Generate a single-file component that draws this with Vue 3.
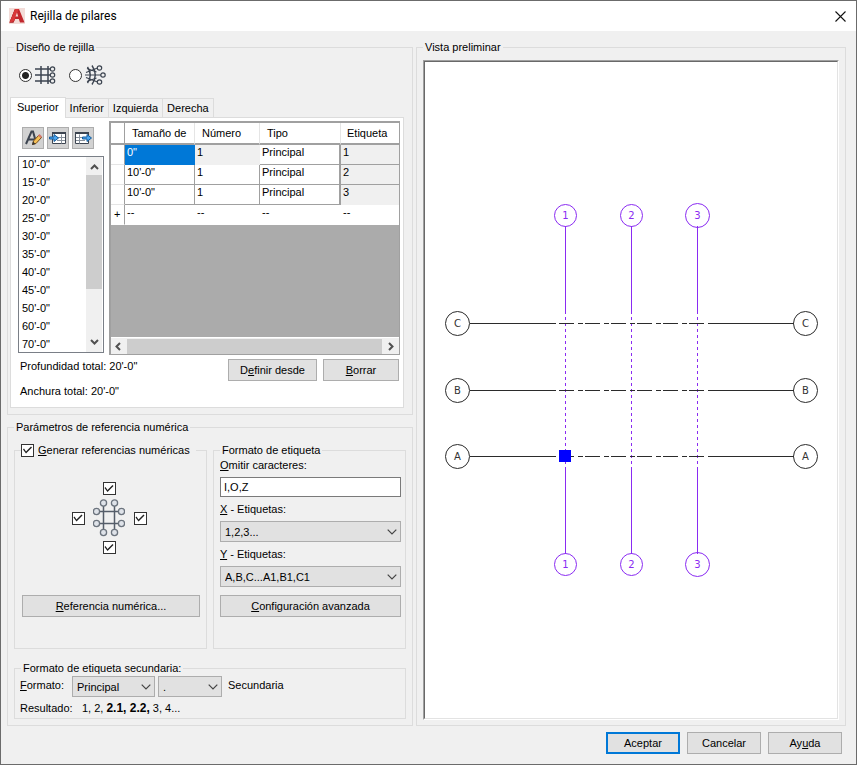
<script setup>
import { ref } from 'vue'

const gridType = ref('rect')
const activeTab = ref('Superior')
const tabs = ['Superior', 'Inferior', 'Izquierda', 'Derecha']
const spacings = ["10'-0\"", "15'-0\"", "20'-0\"", "25'-0\"", "30'-0\"", "35'-0\"", "40'-0\"", "45'-0\"", "50'-0\"", "60'-0\"", "70'-0\""]
const rows = [
  { size: '0"', num: '1', type: 'Principal', label: '1', first: true },
  { size: "10'-0\"", num: '1', type: 'Principal', label: '2' },
  { size: "10'-0\"", num: '1', type: 'Principal', label: '3' }
]
const generate = ref(true)
const sides = ref({ top: true, left: true, right: true, bottom: true })
const omit = ref('I,O,Z')

const verticals = [
  { x: 140.5, r: 11, name: '1' },
  { x: 206.5, r: 11, name: '2' },
  { x: 272.5, r: 12, name: '3' }
]
const horizontals = [
  { y: 261.5, name: 'C' },
  { y: 328.5, name: 'B' },
  { y: 394.5, name: 'A' }
]
</script>

<template>
  <div class="dialog">
    <header class="titlebar">
      <svg class="logo" width="16" height="16" viewBox="0 0 16 16">
        <rect width="16" height="16" fill="#f3dcd8" />
        <path d="M6 1h4l5.500 13.500H11L9.800 11H5.600L4.500 14.500H.5z" fill="#c1272d" />
        <path d="M6 1L.5 14.500h4L9.500 2z" fill="#8e1518" />
        <path d="M6 1h4L5 13.500.5 14.500z" fill="#d8383a" />
        <path d="M8 4.500L9.200 8.500H6.600z" fill="#f3dcd8" />
      </svg>
      <h1>Rejilla de pilares</h1>
      <button class="close" aria-label="Cerrar">
        <svg width="11" height="11" viewBox="0 0 11 11"><path d="M.5.5l10 10M10.500.5l-10 10" stroke="#111" stroke-width="1.100" /></svg>
      </button>
    </header>

    <main class="content">
      <div class="left">
        <fieldset class="group design">
          <legend>Diseño de rejilla</legend>
          <div class="types">
            <label>
              <input v-model="gridType" type="radio" name="type" value="rect" aria-label="Rejilla rectangular" />
              <svg width="21" height="20" viewBox="0 0 21 20" fill="none" stroke="#3c4450">
                <path d="M6 1v18M13 1v18" stroke-width="1.500" />
                <path d="M0 4h15M0 10h15M0 16h15" stroke-width="1.500" />
                <g fill="#f0f0f0" stroke-width="1.200"><circle cx="17.500" cy="4" r="2.200" /><circle cx="17.500" cy="10" r="2.200" /><circle cx="17.500" cy="16" r="2.200" /></g>
              </svg>
            </label>
            <label>
              <input v-model="gridType" type="radio" name="type" value="radial" aria-label="Rejilla radial" />
              <svg width="21" height="20" viewBox="0 0 21 20" fill="none" stroke="#3c4450">
                <path d="M2.500 2Q8 10 2.500 18M7 .5Q13.500 10 7 19.500" stroke-width="1.400" />
                <path d="M0 10h16M1 7.500L12.500 3M1 12.500L12.500 17M2 3.500l9.500 3.500M2 16.500l9.500-3.500" stroke-width="1.200" />
                <g fill="#f0f0f0" stroke-width="1.200"><circle cx="14.500" cy="3" r="2.200" /><circle cx="18" cy="10" r="2.200" /><circle cx="14.500" cy="17" r="2.200" /></g>
              </svg>
            </label>
          </div>

          <div class="tabs" role="tablist">
            <button v-for="t in tabs" :key="t" role="tab" :aria-selected="t === activeTab" :class="{ active: t === activeTab }" @click="activeTab = t">{{ t }}</button>
          </div>

          <div class="panel">
            <div class="lists">
              <div class="spacing">
                <div class="tools">
                  <button aria-label="Editar">
                    <svg width="20" height="20" viewBox="0 0 20 20">
                      <path d="M3 16L8.500 3.500H10L13 14M5.500 11.500H11" fill="none" stroke="#3c4450" stroke-width="2" />
                      <path d="M9.500 16.500l1-3.500 5.500-6 2.500 2.500-5.500 6z" fill="#f4c056" stroke="#7a4c12" />
                      <path d="M9 17l1-3.500 2.500 2.500z" fill="#333" />
                      <path d="M15 7.500l1.500-1.500 2.500 2.500-1.500 1.500z" fill="#d4776b" />
                    </svg>
                  </button>
                  <button aria-label="Insertar">
                    <svg width="20" height="20" viewBox="0 0 20 20">
                      <path d="M4.500 4.500h13v11h-13z" fill="#fff" stroke="#3c4450" />
                      <path d="M4 4h14v2H4z" fill="#3c4450" />
                      <path d="M9 9.500h8M9 12.500h8M13.500 6.500v9" stroke="#87909b" />
                      <path d="M1.500 9H6V6.500l4.500 3.500L6 13.500V11H1.500z" fill="#4da6f0" stroke="#125b9c" />
                    </svg>
                  </button>
                  <button aria-label="Extraer">
                    <svg width="20" height="20" viewBox="0 0 20 20">
                      <path d="M2.500 4.500h13v11h-13z" fill="#fff" stroke="#3c4450" />
                      <path d="M2 4h14v2H2z" fill="#3c4450" />
                      <path d="M3 9.500h9M3 12.500h9M6.500 6.500v9" stroke="#87909b" />
                      <path d="M9.500 9H14V6.500l4.500 3.500-4.500 3.500V11H9.500z" fill="#4da6f0" stroke="#125b9c" />
                    </svg>
                  </button>
                </div>
                <div class="listbox">
                  <select size="11" multiple aria-label="Distancias">
                    <option v-for="s in spacings" :key="s">{{ s }}</option>
                  </select>
                  <div class="vbar">
                    <svg width="9" height="6" viewBox="0 0 9 6"><path d="M1 5l3.500-3.500L8 5" /></svg>
                    <i></i>
                    <svg width="9" height="6" viewBox="0 0 9 6"><path d="M1 1l3.500 3.500L8 1" /></svg>
                  </div>
                </div>
              </div>

              <div class="sheet">
                <table>
                  <colgroup><col class="c0" /><col class="c1" /><col class="c2" /><col class="c3" /><col /></colgroup>
                  <thead>
                    <tr><th></th><th>Tamaño de</th><th>Número</th><th>Tipo</th><th>Etiqueta</th></tr>
                  </thead>
                  <tbody>
                    <tr v-for="r in rows" :key="r.label" :class="{ first: r.first }">
                      <td></td><td>{{ r.size }}</td><td>{{ r.num }}</td><td>{{ r.type }}</td><td>{{ r.label }}</td>
                    </tr>
                    <tr class="new"><td>+</td><td>--</td><td>--</td><td>--</td><td>--</td></tr>
                  </tbody>
                </table>
                <div class="hbar">
                  <svg width="6" height="9" viewBox="0 0 6 9"><path d="M5 1L1.500 4.500 5 8" /></svg>
                  <i></i>
                  <svg width="6" height="9" viewBox="0 0 6 9"><path d="M1 1l3.500 3.500L1 8" /></svg>
                </div>
              </div>
            </div>

            <div class="totals">
              <div class="sums">
                <p>Profundidad total: 20'-0"</p>
                <p>Anchura total: 20'-0"</p>
              </div>
              <button class="btn define">D<u>e</u>finir desde</button>
              <button class="btn clear"><u>B</u>orrar</button>
            </div>
          </div>
        </fieldset>

        <fieldset class="group params">
          <legend>Parámetros de referencia numérica</legend>
          <div class="pair">
            <fieldset class="group generate">
              <legend>
                <label class="check"><input v-model="generate" type="checkbox" /><span><u>G</u>enerar referencias numéricas</span></label>
              </legend>
              <div class="sides">
                <input v-model="sides.top" class="top" type="checkbox" aria-label="Superior" />
                <input v-model="sides.left" class="west" type="checkbox" aria-label="Izquierda" />
                <svg class="mid" width="32" height="38" viewBox="0 0 32 38" fill="none" stroke="#6c747e">
                  <path d="M10.500 7v24M21.500 7v24M6 12.500h20M6 24.500h20" stroke="#555d69" stroke-width="1.500" />
                  <g fill="#dfe3e9" stroke-width="1.300">
                    <circle cx="10.500" cy="4" r="3.100" /><circle cx="21.500" cy="4" r="3.100" />
                    <circle cx="3.500" cy="12.500" r="3.100" /><circle cx="28.500" cy="12.500" r="3.100" />
                    <circle cx="3.500" cy="24.500" r="3.100" /><circle cx="28.500" cy="24.500" r="3.100" />
                    <circle cx="10.500" cy="33.500" r="3.100" /><circle cx="21.500" cy="33.500" r="3.100" />
                  </g>
                </svg>
                <input v-model="sides.right" class="east" type="checkbox" aria-label="Derecha" />
                <input v-model="sides.bottom" class="bottom" type="checkbox" aria-label="Inferior" />
              </div>
              <button class="btn"><u>R</u>eferencia numérica...</button>
            </fieldset>

            <fieldset class="group format">
              <legend>Formato de etiqueta</legend>
              <label for="omit"><u>O</u>mitir caracteres:</label>
              <input id="omit" v-model="omit" type="text" />
              <label for="xl"><u>X</u> - Etiquetas:</label>
              <div class="combo">
                <select id="xl"><option>1,2,3...</option></select>
                <svg width="10" height="6" viewBox="0 0 10 6"><path d="M.7.7L5 5 9.300.7" /></svg>
              </div>
              <label for="yl"><u>Y</u> - Etiquetas:</label>
              <div class="combo">
                <select id="yl"><option>A,B,C...A1,B1,C1</option></select>
                <svg width="10" height="6" viewBox="0 0 10 6"><path d="M.7.7L5 5 9.300.7" /></svg>
              </div>
              <button class="btn"><u>C</u>onfiguración avanzada</button>
            </fieldset>
          </div>

          <fieldset class="group secondary">
            <legend>Formato de etiqueta secundaria:</legend>
            <div class="line">
              <label for="fmt" class="key"><u>F</u>ormato:</label>
              <div class="combo main">
                <select id="fmt"><option>Principal</option></select>
                <svg width="10" height="6" viewBox="0 0 10 6"><path d="M.7.7L5 5 9.300.7" /></svg>
              </div>
              <div class="combo sep">
                <select aria-label="Separador"><option>.</option></select>
                <svg width="10" height="6" viewBox="0 0 10 6"><path d="M.7.7L5 5 9.300.7" /></svg>
              </div>
              <span class="sec">Secundaria</span>
            </div>
            <div class="result"><span>Resultado:</span><span>1, 2,</span><b>2.1, 2.2,</b><span>3, 4...</span></div>
          </fieldset>
        </fieldset>
      </div>

      <fieldset class="group preview">
        <legend>Vista preliminar</legend>
        <div class="canvas">
          <svg viewBox="0 0 412 656" fill="none">
            <g stroke="#8a2bf2">
              <g v-for="v in verticals" :key="v.name">
                <path :d="`M${v.x} 164V252M${v.x} 405V492`" />
                <path :d="`M${v.x} 255V402`" stroke-dasharray="3 3" />
                <circle :cx="v.x" cy="153.500" :r="v.r" />
                <circle :cx="v.x" cy="502.500" :r="v.r" />
              </g>
            </g>
            <g stroke="#2b2b2b">
              <g v-for="h in horizontals" :key="h.name">
                <path :d="`M45 ${h.y}H131M283 ${h.y}H369`" />
                <path :d="`M134 ${h.y}H279`" stroke-dasharray="15 4 5 2" />
                <circle cx="32.500" :cy="h.y" r="12" />
                <circle cx="380.500" :cy="h.y" r="12" />
              </g>
            </g>
            <rect x="134" y="388" width="12" height="12" fill="#0000ff" />
            <g class="names">
              <g v-for="v in verticals" :key="v.name" class="violet">
                <text :x="v.x" y="157">{{ v.name }}</text>
                <text :x="v.x" y="506">{{ v.name }}</text>
              </g>
              <g v-for="h in horizontals" :key="h.name">
                <text x="32.500" :y="h.y + 3.5">{{ h.name }}</text>
                <text x="380.500" :y="h.y + 3.5">{{ h.name }}</text>
              </g>
            </g>
          </svg>
        </div>
      </fieldset>
    </main>

    <footer class="actions">
      <button class="btn default">Aceptar</button>
      <button class="btn">Cancelar</button>
      <button class="btn">Ay<u>u</u>da</button>
    </footer>
  </div>
</template>

<style>
body { margin: 0; background: #f0f0f0; }
</style>

<style scoped>
* { box-sizing: border-box; }
.dialog {
  display: flex;
  flex-direction: column;
  min-height: 100vh;
  border: 1px solid #6b6b6b;
  background: #f0f0f0;
  color: #000;
  font: 11px/14px "Liberation Sans", Arial, sans-serif;
}
button, input, select { font: inherit; color: inherit; margin: 0; }
svg { display: block; flex: none; }
p { margin: 0; }

.titlebar { display: flex; align-items: center; height: 30px; padding: 0 10px 0 8px; background: #fff; }
.titlebar h1 { flex: 1; margin: 0 0 0 5px; font: 12px/14px Roboto, sans-serif; }
.close { padding: 0; border: 0; background: none; }

.content { display: grid; flex: 1; grid-template-columns: minmax(0, 406fr) minmax(0, 430fr); gap: 3px; padding: 9px 10px 6px 6px; }
.left { display: flex; flex-direction: column; gap: 5px; }
.group { min-width: 0; margin: 0; padding: 0; border: 1px solid #dcdcdc; }
legend { padding: 0 2px; white-space: nowrap; }

.design { padding: 10px 8px 6px 2px; }
.design > legend { margin-left: 4px; }
.types { display: flex; gap: 13px; height: 22px; margin-left: 9px; }
.types label { display: flex; align-items: center; gap: 3px; }
input[type="radio"] {
  width: 13px; height: 13px; appearance: none; border: 1px solid #333; border-radius: 50%; background: #fff;
}
input[type="radio"]:checked { background: radial-gradient(circle, #222 3px, #fff 4px); }

.tabs { display: flex; align-items: flex-end; margin-top: 11px; }
.tabs button {
  height: 19px; padding: 0 4px; border: 1px solid #dcdcdc; border-width: 1px 1px 0 0; background: #f0f0f0;
}
.tabs .active { height: 21px; margin-bottom: -1px; padding: 0 6px 2px; border-left-width: 1px; background: #fff; position: relative; }

.panel { padding: 3px 3px 9px 7px; border: 1px solid #dcdcdc; background: #fff; }
.lists { display: grid; grid-template-columns: 86px minmax(0, 1fr); gap: 5px; }
.spacing { padding-top: 6px; }
.tools { display: flex; gap: 3px; padding-left: 4px; }
.tools button { width: 22px; height: 22px; padding: 0; border: 1px solid #adadad; background: #d2d2d2; }
.listbox { display: flex; height: 197px; margin-top: 7px; border: 1px solid #7a7f87; background: #fff; }
.listbox select { flex: 1; min-width: 0; height: 195px; padding: 0; border: 0; outline: 0; background: none; overflow: hidden; scrollbar-width: none; }
.listbox option { min-height: 18px; padding: 1px 3px 3px; line-height: 14px; }
.vbar { display: flex; flex-direction: column; align-items: center; width: 17px; padding: 7px 0; background: #f0f0f0; border-right: 1px solid #fff; }
.vbar i { width: 16px; height: 114px; margin: 5px 0 auto; background: #cdcdcd; }
.vbar path, .hbar path { fill: none; stroke: #505050; stroke-width: 2; }

.sheet { display: flex; flex-direction: column; height: 234px; border: 1px solid #a0a0a0; border-width: 2px 1px 1px 2px; background: #ababab; }
table { width: 100%; table-layout: fixed; border-spacing: 0; background: #fff; }
.c0 { width: 14px; }
.c1 { width: 70px; }
.c2 { width: 65px; }
.c3 { width: 81px; }
th { height: 22px; padding: 0 0 0 7px; border-right: 1px solid #e5e5e5; border-bottom: 2px solid #a0a0a0; font-weight: 400; text-align: left; white-space: nowrap; }
th:first-child { border-right-color: #a0a0a0; }
th:last-child { padding-left: 6px; border-right: 0; }
td { height: 20px; padding: 0 0 0 2px; vertical-align: top; border-bottom: 1px solid #a0a0a0; border-right: 1px solid #a0a0a0; white-space: nowrap; }
td:first-child { border-bottom-color: #e5e5e5; }
td:nth-child(4) { border-right-width: 2px; }
td:last-child { border-right: 0; background: #f0f0f0; }
.first td:nth-child(2) { background: #0078d7; color: #fff; border-color: #0078d7; }
.first td:nth-child(3) { background: #f0f0f0; border-color: #f0f0f0; }
tbody tr:nth-child(3) td:last-child { border-bottom-color: #f0f0f0; }
.new td { border-color: #fff; background: #fff; }
.new td:last-child { background: #fff; }
.new td:first-child { padding-left: 3px; border-right-color: #a0a0a0; line-height: 18px; }
.hbar { display: flex; align-items: center; gap: 6px; height: 17px; margin-top: auto; padding: 1px 5px 1px 4px; border-top: 1px solid #fff; background: #f0f0f0; }
.hbar i { flex: 1; height: 15px; background: #cdcdcd; }

.totals { display: flex; align-items: flex-start; padding: 4px 1px 0 2px; }
.sums { display: grid; flex: 1; gap: 11px; }
.btn { height: 22px; padding: 0 4px; border: 1px solid #adadad; background: #e1e1e1; white-space: nowrap; }
.define { width: 89px; }
.clear { width: 76px; margin-left: 6px; }

.params { padding: 9px 6px 6px; }
.pair { display: grid; grid-template-columns: minmax(0, 1fr) minmax(0, 1fr); gap: 6px; }
.generate { padding: 25px 6px 0 7px; }
.generate legend { margin-left: -1px; padding: 0 6px 0 0; }
.generate .btn { display: block; width: 100%; margin-top: 41px; }
.check { display: flex; align-items: center; gap: 4px; }
input[type="checkbox"] { display: block; width: 13px; height: 13px; appearance: none; border: 1px solid #333; background: #fff; }
input[type="checkbox"]:checked::before {
  content: ""; display: block; width: 11px; height: 11px; background: #222;
  clip-path: polygon(1px 5px, 2px 4px, 4px 7px, 9px 2px, 10px 3px, 4px 9px);
}
.sides { display: grid; grid-template-columns: 13px 33px 13px; grid-template-areas: ". top ." "west mid east" ". bottom ."; column-gap: 8px; row-gap: 4px; justify-content: center; align-items: center; justify-items: center; margin-right: 4px; }
.top { grid-area: top; }
.west { grid-area: west; }
.mid { grid-area: mid; }
.east { grid-area: east; }
.bottom { grid-area: bottom; }

.format { display: block; padding: 1px 4px 31px 6px; }
.format > legend { margin-left: 0; }
.format > label { display: block; margin-bottom: 5px; }
.format > input { display: block; width: 100%; height: 20px; margin-bottom: 5px; padding: 0 3px; border: 1px solid #7a7a7a; background: #fff; }
.combo { display: grid; align-items: center; }
.combo select, .combo svg { grid-area: 1 / 1; }
.combo select { width: 100%; height: 21px; padding: 0 4px; appearance: none; border: 1px solid #adadad; border-radius: 0; background: #e1e1e1; }
.combo svg { justify-self: end; margin-right: 4px; pointer-events: none; }
.combo path { fill: none; stroke: #444; stroke-width: 1.2; }
.format .combo { margin-bottom: 5px; }
.format .btn { display: block; width: 100%; margin-top: 8px; }

.secondary { margin-top: 12px; padding: 1px 5px 3px; }
.secondary > legend { margin-left: 1px; }
.line { display: flex; gap: 3px; }
.key { width: 49px; padding-top: 2px; }
.main { width: 83px; }
.sep { width: 64px; }
.sec { padding: 2px 0 0 3px; }
.result { display: flex; gap: 3px; padding-top: 4px; }
.result span:first-child { width: 59px; }
.result b { font-size: 12px; font-weight: 700; }

.preview { display: flex; padding: 6px 6px 5px; }
.canvas { display: flex; flex: 1; min-width: 0; border: 1px solid #a0a0a0; border-right-color: #fff; border-bottom-color: #fff; background: #fff; }
.canvas svg { flex: 1; width: 100%; min-width: 0; border: 1px solid #696969; border-right-color: #e3e3e3; border-bottom-color: #e3e3e3; }
.names { font: 10px "DejaVu Sans", sans-serif; text-anchor: middle; fill: #333; }
.violet { fill: #8a2bf2; }

.actions { display: flex; justify-content: flex-end; gap: 7px; padding: 0 14px 10px; }
.actions .btn { width: 74px; }
.actions .default { border: 2px solid #0078d7; }
</style>
